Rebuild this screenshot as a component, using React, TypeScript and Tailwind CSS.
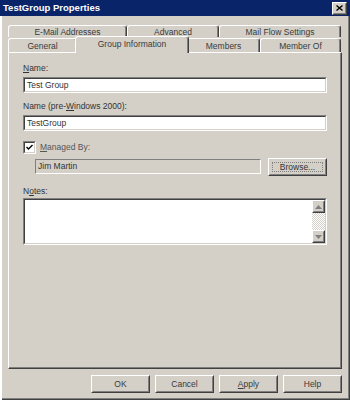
import React from "react";

// Win2000-style bevel helpers
function Raised({ className = "", innerClassName = "", children }: { className?: string; innerClassName?: string; children?: React.ReactNode }) {
  return (
    <div className={`border border-t-white border-l-white border-r-[#404040] border-b-[#404040] ${className}`}>
      <div className={`h-full w-full border border-t-[#d4d0c8] border-l-[#d4d0c8] border-r-[#808080] border-b-[#808080] bg-[#d4d0c8] ${innerClassName}`}>
        {children}
      </div>
    </div>
  );
}

function Sunken({ className = "", innerClassName = "", children }: { className?: string; innerClassName?: string; children?: React.ReactNode }) {
  return (
    <div className={`border border-t-[#808080] border-l-[#808080] border-r-white border-b-white ${className}`}>
      <div className={`h-full w-full border border-t-[#404040] border-l-[#404040] border-r-[#d4d0c8] border-b-[#d4d0c8] ${innerClassName}`}>
        {children}
      </div>
    </div>
  );
}

function Tab({ label, width, height, selected = false }: { label: string; width: string; height: string; selected?: boolean }) {
  return (
    <div
      className={`${width} ${height} ${
        selected ? "relative z-10 -mx-[2px] pb-[3px]" : "mb-px"
      } flex shrink-0 items-center justify-center rounded-t-[3px] border-t border-l border-r border-t-white border-l-white border-r-[#404040] bg-[#d4d0c8] shadow-[inset_-1px_0_#808080]`}
    >
      <span className="leading-[10px] text-[#3a3a3a]">{label}</span>
    </div>
  );
}

function Arrow({ up }: { up: boolean }) {
  return (
    <svg width="7" height="4" viewBox="0 0 7 4">
      {up ? <path d="M0 4 L3.5 0 L7 4 Z" fill="#808080" /> : <path d="M0 0 L3.5 4 L7 0 Z" fill="#808080" />}
    </svg>
  );
}

export default function App() {
  return (
    <div className="flex h-[400px] w-[350px] flex-col overflow-hidden bg-[#d4d0c8] font-['Liberation_Sans',Arial,sans-serif] text-[8.5px] text-[#333] shadow-[inset_2px_0_#fff,inset_-1px_-1px_#404040,inset_-2px_-2px_#808080]">
      {/* Title bar */}
      <div className="flex h-[16px] shrink-0 items-center justify-between bg-[#0a246a] pl-[3px] pr-[3px]">
        <span className="text-[9.5px] font-bold leading-none text-white">TestGroup Properties</span>
        <Raised className="h-[13px] w-[15px]" innerClassName="flex items-center justify-center">
          <svg width="7" height="6" viewBox="0 0 7 6">
            <path d="M0.5 0.5 L6.5 5.5 M6.5 0.5 L0.5 5.5" stroke="#000" strokeWidth="1.4" />
          </svg>
        </Raised>
      </div>

      {/* Tab rows */}
      <div className="mt-[9px] flex pl-[8px]">
        <Tab label="E-Mail Addresses" width="w-[119px]" height="h-[12px]" />
        <Tab label="Advanced" width="w-[92px]" height="h-[12px]" />
        <Tab label="Mail Flow Settings" width="w-[122px]" height="h-[12px]" />
      </div>
      <div className="relative z-10 -mb-px -mt-[2px] flex h-[17px] items-end pl-[8px]">
        <Tab label="General" width="w-[69px]" height="h-[14px]" />
        <Tab label="Group Information" width="w-[114px]" height="h-[17px]" selected />
        <Tab label="Members" width="w-[73px]" height="h-[14px]" />
        <Tab label="Member Of" width="w-[81px]" height="h-[14px]" />
      </div>

      {/* Panel */}
      <div className="ml-[8px] h-[317px] w-[334px] shrink-0 border border-t-white border-l-white border-r-[#404040] border-b-[#404040] shadow-[inset_-1px_-1px_#808080]">
        <div className="flex flex-col px-[14px]">
          <div className="mt-[9px] leading-[12px]">
            <span className="underline">N</span>ame:
          </div>
          <Sunken className="mt-[3px] h-[16px]" innerClassName="flex items-center bg-white pl-[2px]">
            <span className="leading-none">Test Group</span>
          </Sunken>

          <div className="mt-[7px] leading-[12px]">
            Name (pre-<span className="underline">W</span>indows 2000):
          </div>
          <Sunken className="mt-[3px] h-[16px]" innerClassName="flex items-center bg-white pl-[2px]">
            <span className="leading-none">TestGroup</span>
          </Sunken>

          <div className="mt-[10px] flex h-[13px] items-center gap-[4px]">
            <Sunken className="h-[13px] w-[13px]" innerClassName="flex items-center justify-center bg-white">
              <svg width="7" height="7" viewBox="0 0 7 7">
                <path d="M0.5 3 L2.5 5 L6.5 1" stroke="#000" strokeWidth="1.4" fill="none" />
              </svg>
            </Sunken>
            <span className="leading-none text-[#555]">
              <span className="underline">M</span>anaged By:
            </span>
          </div>

          <div className="mt-[4px] flex h-[18px] items-start gap-[7px] pl-[12px]">
            <div className="mt-px flex h-[15px] flex-1 items-center border border-t-[#808080] border-l-[#808080] border-r-white border-b-white bg-[#d4d0c8] pl-[2px]">
              <span className="leading-none">Jim Martin</span>
            </div>
            <Raised className="h-[18px] w-[59px]" innerClassName="p-[2px]">
              <div className="flex h-full w-full items-center justify-center border border-dotted border-[#808080]">
                <span className="leading-none">Browse...</span>
              </div>
            </Raised>
          </div>

          <div className="mt-[9px] leading-[12px]">
            N<span className="underline">o</span>tes:
          </div>
          <Sunken className="mt-px h-[47px]" innerClassName="flex bg-white">
            <div className="flex-1" />
            <div className="flex w-[13px] flex-col">
              <Raised className="h-[13px] w-[13px]" innerClassName="flex items-center justify-center">
                <Arrow up />
              </Raised>
              <div className="flex-1 bg-[repeating-conic-gradient(#d4d0c8_0_25%,#ffffff_0_50%)] bg-[length:2px_2px]" />
              <Raised className="h-[13px] w-[13px]" innerClassName="flex items-center justify-center">
                <Arrow up={false} />
              </Raised>
            </div>
          </Sunken>
        </div>
      </div>

      {/* Buttons */}
      <div className="mt-[6px] flex justify-end gap-[5px] pr-[8px]">
        {[
          <>OK</>,
          <>Cancel</>,
          <>
            <span className="underline">A</span>pply
          </>,
          <>Help</>,
        ].map((label, i) => (
          <Raised key={i} className="h-[18px] w-[59px]" innerClassName="flex items-center justify-center">
            <span className="leading-none text-[#3a3a3a]">{label}</span>
          </Raised>
        ))}
      </div>
    </div>
  );
}
